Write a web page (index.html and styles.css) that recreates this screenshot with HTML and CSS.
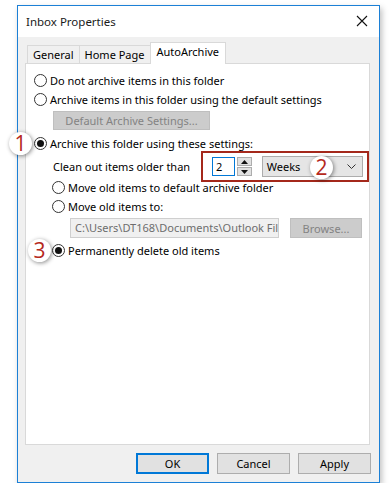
FILE: index.html
```html
<!DOCTYPE html>
<html lang="en">
<head>
    <meta charset="UTF-8">
    <meta name="viewport" content="width=device-width, initial-scale=1.0">
    <title>Inbox Properties</title>
    <link rel="stylesheet" href="styles.css">
</head>
<body>
    <div class="window">
        <!-- 标题栏 -->
        <div class="titlebar">
            <span class="title">Inbox Properties</span>
            <svg class="close" width="12" height="12" viewBox="0 0 12 12">
                <path d="M1 1 L11 11 M11 1 L1 11" stroke="#111" stroke-width="1.1" fill="none"/>
            </svg>
        </div>

        <div class="content">
            <div class="tabs">
                <div class="tab">General</div>
                <div class="tab">Home Page</div>
                <div class="tab active">AutoArchive</div>
            </div>

            <div class="panel">
                <label class="row">
                    <span class="radio"></span>
                    Do not archive items in this folder
                </label>
                <label class="row">
                    <span class="radio"></span>
                    Archive items in this folder using the default settings
                </label>
                <div class="btn disabled wide">Default Archive Settings...</div>

                <label class="row row-badge">
                    <span class="badge badge-1">1</span>
                    <span class="radio checked"></span>
                    Archive this folder using these settings:
                </label>

                <div class="clean-row">
                    <span class="clean-label">Clean out items older than</span>
                    <div class="highlight">
                        <div class="spin-input">2</div>
                        <div class="spin-buttons">
                            <div class="spin-btn">
                                <svg width="7" height="4" viewBox="0 0 7 4"><path d="M0 4 L3.5 0 L7 4 Z" fill="#111"/></svg>
                            </div>
                            <div class="spin-btn">
                                <svg width="7" height="4" viewBox="0 0 7 4"><path d="M0 0 L3.5 4 L7 0 Z" fill="#111"/></svg>
                            </div>
                        </div>
                        <div class="select">
                            <span>Weeks</span>
                            <svg width="9" height="5" viewBox="0 0 9 5"><path d="M0.5 0.5 L4.5 4.5 L8.5 0.5" stroke="#333" stroke-width="1" fill="none"/></svg>
                        </div>
                        <span class="badge badge-2">2</span>
                    </div>
                </div>

                <div class="sub">
                    <label class="row">
                        <span class="radio"></span>
                        Move old items to default archive folder
                    </label>
                    <label class="row">
                        <span class="radio"></span>
                        Move old items to:
                    </label>
                    <div class="path-row">
                        <div class="path-input">C:\Users\DT168\Documents\Outlook Files</div>
                        <div class="btn disabled browse">Browse...</div>
                    </div>
                    <label class="row row-badge perm">
                        <span class="badge badge-3">3</span>
                        <span class="radio checked"></span>
                        Permanently delete old items
                    </label>
                </div>
            </div>

            <div class="actions">
                <div class="btn default">OK</div>
                <div class="btn">Cancel</div>
                <div class="btn">Apply</div>
            </div>
        </div>
    </div>
</body>
</html>
```

FILE: styles.css
```css
* {
    box-sizing: border-box;
    margin: 0;
    padding: 0;
    font-family: 'Noto Sans', 'Open Sans', sans-serif;
}

body {
    background: #ffffff;
    padding: 5px 0 0 17px;
    font-size: 11px;
    color: #000;
}

.window {
    width: 363px;
    height: 478px;
    border: 1px solid #1c80d6;
    background-color: #f0f0f0;
    box-shadow: 2px 3px 6px rgba(0, 0, 0, 0.25);
    display: flex;
    flex-direction: column;
}

/* 标题栏 */
.titlebar {
    height: 31px;
    background: #ffffff;
    display: flex;
    align-items: center;
    justify-content: space-between;
    padding: 0 11px 1px 8px;
}

.title {
    font-size: 11.5px;
    color: #1a1a1a;
}

.close {
    display: block;
}

.content {
    flex: 1;
    padding: 6px 9px 0 7px;
    display: flex;
    flex-direction: column;
}

/* 选项卡 */
.tabs {
    display: flex;
    align-items: flex-end;
    padding-left: 2px;
    height: 20px;
    position: relative;
    z-index: 1;
}

.tab {
    height: 18px;
    padding: 0 5px;
    border: 1px solid #d9d9d9;
    border-bottom: none;
    background: #f0f0f0;
    line-height: 17px;
    margin-right: -1px;
}

.tab.active {
    height: 22px;
    background: #ffffff;
    line-height: 18px;
    padding: 0 6px;
    margin-bottom: -1px;
}

.panel {
    height: 382px;
    background: #ffffff;
    border: 1px solid #d9d9d9;
    padding: 7px 0 0 8px;
}

.row {
    display: flex;
    align-items: center;
    height: 19px;
    gap: 3px;
    position: relative;
}

.radio {
    width: 13px;
    height: 13px;
    border: 1px solid #333;
    border-radius: 50%;
    background: #fff;
    display: flex;
    align-items: center;
    justify-content: center;
    flex-shrink: 0;
}

.radio.checked::after {
    content: '';
    width: 7px;
    height: 7px;
    border-radius: 50%;
    background: #111;
}

/* 按钮 */
.btn {
    height: 21px;
    width: 74px;
    border: 1px solid #adadad;
    background: #e1e1e1;
    display: flex;
    align-items: center;
    justify-content: center;
}

.btn.disabled {
    background: #cccccc;
    border-color: #bfbfbf;
    color: #838383;
}

.btn.wide {
    width: 157px;
    height: 19px;
    margin: 2px 0 0 19px;
}

.btn.default {
    border: 2px solid #0078d7;
}

.row-badge {
    margin-top: 4px;
}

.badge {
    position: absolute;
    width: 23px;
    height: 23px;
    border-radius: 50%;
    background: #ffffff;
    box-shadow: 1px 1px 4px rgba(0, 0, 0, 0.45);
    color: #b5291c;
    font-size: 21px;
    line-height: 23px;
    text-align: center;
    font-family: 'Open Sans', 'Noto Sans', sans-serif;
}

.badge-1 {
    left: -25px;
    top: -2px;
}

.badge-3 {
    left: -24px;
    top: -2px;
}

.badge-2 {
    left: 107px;
    top: 3px;
}

/* 清理设置行 */
.clean-row {
    display: flex;
    align-items: center;
    height: 31px;
    margin: -2px 0 -4px;
    padding-left: 19px;
}

.clean-label {
    width: 148px;
}

.highlight {
    position: relative;
    display: flex;
    align-items: center;
    width: 168px;
    height: 31px;
    border: 2px solid #a4281b;
    padding: 0 4px 0 9px;
}

.spin-input {
    width: 23px;
    height: 19px;
    border: 1px solid #0078d7;
    padding-left: 3px;
    line-height: 17px;
}

.spin-buttons {
    margin-left: 2px;
    width: 15px;
    height: 19px;
    display: flex;
    flex-direction: column;
    gap: 1px;
}

.spin-btn {
    flex: 1;
    border: 1px solid #adadad;
    background: #e1e1e1;
    display: flex;
    align-items: center;
    justify-content: center;
}

.select {
    margin-left: 10px;
    width: 102px;
    height: 21px;
    border: 1px solid #adadad;
    background: #e5e5e5;
    display: flex;
    align-items: center;
    justify-content: space-between;
    padding: 0 6px 0 4px;
}

.sub {
    padding-left: 18px;
}

.path-row {
    display: flex;
    margin-top: 2px;
    padding-left: 18px;
    gap: 11px;
}

.path-input {
    width: 209px;
    height: 20px;
    border: 1px solid #cfcfcf;
    background: #f0f0f0;
    color: #6d6d6d;
    padding-left: 4px;
    line-height: 18px;
    overflow: hidden;
    white-space: nowrap;
}

.btn.browse {
    width: 72px;
    height: 20px;
}

.perm {
    margin-top: 3px;
}

/* 底部按钮 */
.actions {
    display: flex;
    justify-content: flex-end;
    gap: 8px;
    padding-top: 8px;
    margin-right: -1px;
}

.actions .btn {
    width: 73px;
}
```
